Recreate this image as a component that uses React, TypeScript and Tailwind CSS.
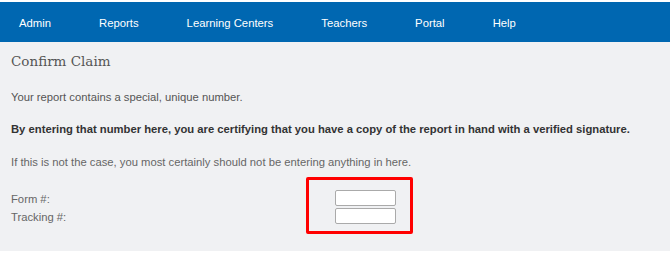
import React from "react";

const navItems = ["Admin", "Reports", "Learning Centers", "Teachers", "Portal", "Help"];

export default function App() {
  return (
    <div className="w-[670px] h-[254px] bg-white pt-[2px] font-['Liberation_Sans',Arial,sans-serif]">
      <nav className="h-[40px] bg-[#0067b1] flex items-center pl-[19px] pt-[3px] gap-[48px] text-white text-[11.3px]">
        {navItems.map((n) => (
          <span key={n}>{n}</span>
        ))}
      </nav>
      <main className="relative h-[209px] bg-[#f0f1f3] px-[11px] pt-[9px]">
        <h1 className="font-['DejaVu_Serif',serif] text-[13.5px] text-[#555] leading-[20px]">Confirm Claim</h1>
        <p className="mt-[18px] text-[11.25px] text-[#555] leading-[16px]">Your report contains a special, unique number.</p>
        <p className="mt-[16px] text-[11.25px] font-bold text-[#333] leading-[16px]">
          By entering that number here, you are certifying that you have a copy of the report in hand with a verified signature.
        </p>
        <p className="mt-[17px] text-[11.25px] text-[#666] leading-[16px]">
          If this is not the case, you most certainly should not be entering anything in here.
        </p>
        <div className="mt-[20px] flex">
          <div className="w-[324px] text-[11.25px] text-[#666] leading-[18px]">
            <div>Form #:</div>
            <div>Tracking #:</div>
          </div>
          <div className="flex flex-col gap-[2px]">
            <input className="w-[61px] h-[16px] bg-white border border-[#aaa] rounded-[2px]" />
            <input className="w-[61px] h-[16px] bg-white border border-[#aaa] rounded-[2px]" />
          </div>
        </div>
        <div className="absolute left-[306px] top-[135px] w-[107px] h-[57px] border-[3px] border-[#ff0000] rounded-[2px]" />
      </main>
    </div>
  );
}
